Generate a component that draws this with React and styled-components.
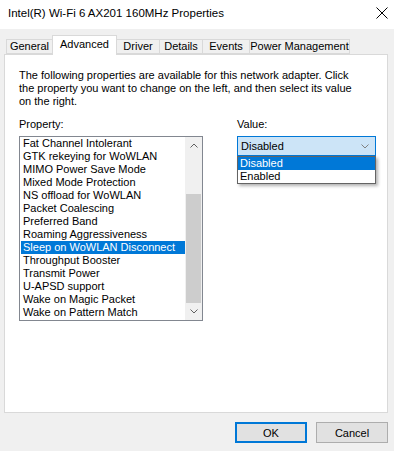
import React from 'react';
import styled, { createGlobalStyle } from 'styled-components';

const GlobalStyle = createGlobalStyle`
  html, body {
    margin: 0;
    padding: 0;
    background: #f0f0f0;
  }
  * {
    box-sizing: border-box;
  }
`;

const Window = styled.div`
  width: 394px;
  height: 451px;
  background: #f0f0f0;
  font-family: 'Liberation Sans', Arial, sans-serif;
  font-size: 11px;
  color: #000;
  display: flex;
  flex-direction: column;
  overflow: hidden;
`;

const TitleBar = styled.div`
  height: 29px;
  background: #fff;
  display: flex;
  align-items: center;
  justify-content: space-between;
  padding: 0 6px 4px 8px;
  font-size: 11.5px;
`;

const CloseButton = styled.div`
  width: 12px;
  height: 12px;
  display: flex;
`;

const TabStrip = styled.div`
  display: flex;
  align-items: flex-end;
  height: 25px;
  padding-left: 7px;
  position: relative;
  z-index: 1;
`;

const Tab = styled.div`
  width: ${({ w }) => w}px;
  height: ${({ active }) => (active ? '20px' : '15px')};
  margin-bottom: ${({ active }) => (active ? '-1px' : '0')};
  background: ${({ active }) => (active ? '#fff' : '#f0f0f0')};
  border: 1px solid #d9d9d9;
  border-bottom: ${({ active }) => (active ? 'none' : '1px solid #d9d9d9')};
  margin-left: -1px;
  display: flex;
  align-items: ${({ active }) => (active ? 'flex-start' : 'center')};
  justify-content: center;
  padding-top: ${({ active }) => (active ? '2px' : '0')};
  line-height: 13px;
  white-space: nowrap;
`;

const Panel = styled.div`
  margin: 0 6px 0 4px;
  height: 359px;
  background: #fff;
  border: 1px solid #d9d9d9;
  padding: 14px 10px 0 14px;
`;

const Description = styled.p`
  margin: 0;
  line-height: 13px;
  white-space: nowrap;
`;

const Columns = styled.div`
  display: flex;
  margin-top: 10px;
  gap: 34px;
`;

const Column = styled.div`
  display: flex;
  flex-direction: column;
  width: ${({ w }) => w}px;
  position: relative;
`;

const Label = styled.div`
  line-height: 13px;
  margin-bottom: 5px;
`;

const ListBox = styled.div`
  height: 185px;
  border: 1px solid #828790;
  display: flex;
`;

const Items = styled.div`
  flex: 1;
`;

const Item = styled.div`
  height: 13px;
  line-height: 13px;
  padding-left: 2px;
  margin-left: 1px;
  white-space: nowrap;
  background: ${({ selected }) => (selected ? '#0078d7' : 'transparent')};
  color: ${({ selected }) => (selected ? '#fff' : '#000')};
`;

const ScrollBar = styled.div`
  width: 17px;
  background: #f0f0f0;
  display: flex;
  flex-direction: column;
`;

const ScrollArrow = styled.div`
  height: 17px;
  display: flex;
  align-items: center;
  justify-content: center;
`;

const ScrollTrack = styled.div`
  flex: 1;
  display: flex;
  flex-direction: column;
  padding: 0 1px;
`;

const ScrollThumb = styled.div`
  margin-top: ${({ top }) => top}px;
  height: ${({ h }) => h}px;
  background: #cdcdcd;
`;

const Combo = styled.div`
  height: 20px;
  border: 1px solid #0078d7;
  background: #cce4f7;
  display: flex;
  align-items: center;
  justify-content: space-between;
  padding: 0 6px 0 3px;
`;

const DropList = styled.div`
  position: absolute;
  left: 0;
  right: 0;
  top: 38px;
  background: #fff;
  border: 1px solid #646464;
  box-shadow: 2px 2px 3px rgba(0, 0, 0, 0.3);
`;

const DropItem = styled.div`
  height: 13px;
  line-height: 13px;
  padding-left: 2px;
  background: ${({ selected }) => (selected ? '#0078d7' : '#fff')};
  color: ${({ selected }) => (selected ? '#fff' : '#000')};
`;

const Footer = styled.div`
  display: flex;
  justify-content: flex-end;
  gap: 9px;
  padding: 9px 6px 0 0;
`;

const Button = styled.div`
  width: 72px;
  height: 21px;
  background: #e1e1e1;
  border: ${({ primary }) => (primary ? '2px solid #0078d7' : '1px solid #adadad')};
  display: flex;
  align-items: center;
  justify-content: center;
`;

const Chevron = ({ up, color = '#606060', w = 8 }) => (
  <svg width={w} height={w / 2 + 1} viewBox="0 0 8 5">
    <polyline
      points={up ? '0.5,4.5 4,1 7.5,4.5' : '0.5,0.5 4,4 7.5,0.5'}
      fill="none"
      stroke={color}
      strokeWidth="1"
    />
  </svg>
);

const tabs = [
  ['General', 47],
  ['Advanced', 65],
  ['Driver', 44],
  ['Details', 44],
  ['Events', 48],
  ['Power Management', 101],
];

const properties = [
  'Fat Channel Intolerant',
  'GTK rekeying for WoWLAN',
  'MIMO Power Save Mode',
  'Mixed Mode Protection',
  'NS offload for WoWLAN',
  'Packet Coalescing',
  'Preferred Band',
  'Roaming Aggressiveness',
  'Sleep on WoWLAN Disconnect',
  'Throughput Booster',
  'Transmit Power',
  'U-APSD support',
  'Wake on Magic Packet',
  'Wake on Pattern Match',
];

export default function App() {
  return (
    <Window>
      <GlobalStyle />
      <TitleBar>
        <span>Intel(R) Wi-Fi 6 AX201 160MHz Properties</span>
        <CloseButton>
          <svg width="12" height="12" viewBox="0 0 12 12">
            <path d="M0.5 0.5 L11.5 11.5 M11.5 0.5 L0.5 11.5" stroke="#000" strokeWidth="1" />
          </svg>
        </CloseButton>
      </TitleBar>
      <TabStrip>
        {tabs.map(([name, w]) => (
          <Tab key={name} w={w} active={name === 'Advanced'}>
            {name}
          </Tab>
        ))}
      </TabStrip>
      <Panel>
        <Description>
          The following properties are available for this network adapter. Click
          <br />
          the property you want to change on the left, and then select its value
          <br />
          on the right.
        </Description>
        <Columns>
          <Column w={184}>
            <Label>Property:</Label>
            <ListBox>
              <Items>
                {properties.map((p) => (
                  <Item key={p} selected={p === 'Sleep on WoWLAN Disconnect'}>
                    {p}
                  </Item>
                ))}
              </Items>
              <ScrollBar>
                <ScrollArrow>
                  <Chevron up />
                </ScrollArrow>
                <ScrollTrack>
                  <ScrollThumb top={40} h={109} />
                </ScrollTrack>
                <ScrollArrow>
                  <Chevron />
                </ScrollArrow>
              </ScrollBar>
            </ListBox>
          </Column>
          <Column w={139}>
            <Label>Value:</Label>
            <Combo>
              <span>Disabled</span>
              <Chevron color="#808080" />
            </Combo>
            <DropList>
              <DropItem selected>Disabled</DropItem>
              <DropItem>Enabled</DropItem>
            </DropList>
          </Column>
        </Columns>
      </Panel>
      <Footer>
        <Button primary>OK</Button>
        <Button>Cancel</Button>
      </Footer>
    </Window>
  );
}
